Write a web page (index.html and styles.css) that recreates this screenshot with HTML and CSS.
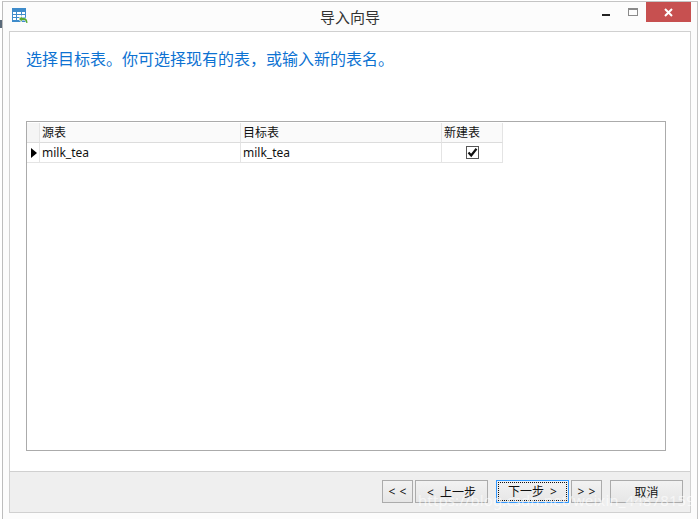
FILE: index.html
```html
<!DOCTYPE html>
<html lang="zh-CN">
<head>
  <meta charset="UTF-8" />
  <title>导入向导</title>
  <link rel="stylesheet" href="styles.css">
</head>
<body>
  <span class="behind"></span>
  <div class="window">
    <div class="titlebar">
      <svg class="app-icon" width="16" height="16" viewBox="0 0 16 16">
        <rect x="0.500" y="0.500" width="13" height="13" fill="#fff" stroke="#3f8ccb"/>
        <rect x="0" y="0" width="14" height="4" fill="#3f8ccb"/>
        <path d="M1 6.500H13M1 9.500H13M1 12.500H13M4.500 4V13M9.500 4V13" stroke="#3f8ccb" fill="none"/>
        <path d="M6 11L10 7V9.500H12C14.500 9.500 16 11.500 16 15H14C14 13.500 13 12.500 12 12.500H10V15Z" fill="#fff"/>
        <path d="M7 11L9.800 8.200V10H12C14 10 15.500 11.800 15.500 15H14.300C14 13.200 13.200 12 12 12H9.800V13.800Z" fill="#5aaa32"/>
      </svg>
      <div class="title">导入向导</div>
      <div class="controls">
        <span class="min"></span>
        <span class="max"></span>
        <span class="close">
          <svg width="9" height="9" viewBox="0 0 9 9"><path d="M1 1L8 8M8 1L1 8" stroke="#fff" stroke-width="2" fill="none"/></svg>
        </span>
      </div>
    </div>
    <div class="panel">
      <div class="content">
        <p class="hint">选择目标表。你可选择现有的表，或输入新的表名。</p>
        <div class="grid-box">
          <div class="grid">
            <div class="head corner"></div>
            <div class="head">源表</div>
            <div class="head">目标表</div>
            <div class="head">新建表</div>
            <div class="cell marker"><span class="arrow"></span></div>
            <div class="cell">milk_tea</div>
            <div class="cell">milk_tea</div>
            <div class="cell check-cell">
              <span class="checkbox">
                <svg width="11" height="11" viewBox="0 0 11 11"><path d="M1.500 5.500L4.200 8.500L9.500 1.800" stroke="#111" stroke-width="2.200" fill="none"/></svg>
              </span>
            </div>
          </div>
        </div>
      </div>
      <div class="footer">
        <button class="btn small">&lt; &lt;</button>
        <button class="btn medium">&lt; 上一步</button>
        <button class="btn medium active"><span class="focus">下一步 &gt;</span></button>
        <button class="btn small">&gt; &gt;</button>
        <button class="btn medium cancel">取消</button>
      </div>
    </div>
  </div>
  <div class="watermark">https://blog.csdn.net/weixin_44878159</div>
</body>
</html>
```

FILE: styles.css
```css
html, body {
  margin: 0;
  height: 100%;
  overflow: hidden;
}
body {
  background: #fff;
  font-family: "Noto Sans", "Noto Sans CJK SC", sans-serif;
  font-size: 12px;
  color: #111;
  position: relative;
}
/* sliver of the window behind the dialog */
.behind {
  position: absolute;
  left: 0;
  top: 20px;
  width: 2px;
  height: 8px;
  background: #5a6a7a;
}
.window {
  box-sizing: border-box;
  height: 518px;
  margin: 1px 2px 0;
  padding: 0 6px 6px;
  background: #fcfcfc;
  border-left: 1px solid #bdbdbd;
  border-right: 1px solid #c4c4c4;
  border-top: 1px solid #c4c4c4;
  display: flex;
  flex-direction: column;
}
.titlebar {
  height: 29px;
  flex: none;
  display: flex;
  align-items: flex-start;
  position: relative;
}
.app-icon {
  margin-left: 3px;
  margin-top: 6px;
}
.title {
  position: absolute;
  left: 0;
  right: 0;
  top: 6px;
  text-align: center;
  font-size: 15px;
  line-height: 18px;
  color: #333;
}
.controls {
  margin-left: auto;
  display: flex;
  align-items: flex-start;
}
.min {
  width: 8px;
  height: 2px;
  background: #222;
  margin-top: 12px;
  margin-right: 18px;
}
.max {
  box-sizing: border-box;
  width: 10px;
  height: 8px;
  border: 1px solid #8a8a8a;
  border-top-width: 2px;
  margin-top: 6px;
  margin-right: 8px;
}
.close {
  width: 45px;
  height: 20px;
  background: #c75050;
  display: flex;
  align-items: center;
  justify-content: center;
}
.panel {
  flex: 1;
  display: flex;
  flex-direction: column;
  border: 1px solid #d0d0d0;
  background: #fff;
}
.content {
  flex: 1;
  padding: 0 24px 0 16px;
  display: flex;
  flex-direction: column;
}
.hint {
  margin: 17px 0 0;
  font-size: 16px;
  line-height: 20px;
  color: #0d72d2;
}
.grid-box {
  box-sizing: border-box;
  height: 330px;
  margin-top: 52px;
  padding-top: 1px;
  border: 1px solid #ababab;
}
.grid {
  display: grid;
  grid-template-columns: 13px 201px 201px 61px;
  grid-template-rows: 20px 20px;
  width: max-content;
}
.head, .cell {
  box-sizing: border-box;
  border-right: 1px solid #e4e4e4;
  border-bottom: 1px solid #e4e4e4;
  padding-left: 2px;
  line-height: 19px;
  white-space: nowrap;
}
.head {
  background: #fafafa;
  border-bottom-color: #dcdcdc;
}
.corner {
  background: #f5f5f5;
}
.marker {
  padding-left: 4px;
  display: flex;
  align-items: center;
}
.arrow {
  width: 0;
  height: 0;
  border-top: 5.5px solid transparent;
  border-bottom: 5.5px solid transparent;
  border-left: 6px solid #000;
}
.check-cell {
  padding: 0;
  display: flex;
  align-items: center;
  justify-content: center;
}
.checkbox {
  box-sizing: border-box;
  width: 13px;
  height: 13px;
  background: #fff;
  border: 1px solid #555;
  display: flex;
}
.footer {
  height: 41px;
  flex: none;
  box-sizing: border-box;
  background: #efefef;
  border-top: 1px solid #d0d0d0;
  display: flex;
  gap: 2px;
  padding: 8px 7px 0 372px;
}
.btn {
  box-sizing: border-box;
  height: 23px;
  padding: 0;
  background: linear-gradient(#f2f2f2, #e6e6e6);
  border: 1px solid #ababab;
  font: inherit;
  word-spacing: 3px;
  color: #111;
}
.small {
  width: 31px;
  word-spacing: 1px;
}
.medium {
  width: 73px;
}
.active {
  margin-left: 6px;
  border-color: #3399ff;
  padding: 1px;
}
.focus {
  display: block;
  height: 19px;
  line-height: 17px;
  box-sizing: border-box;
  border: 1px dotted #111;
}
.cancel {
  margin-left: 6px;
}
.watermark {
  position: absolute;
  left: 418px;
  top: 491px;
  font-size: 15px;
  line-height: 18px;
  letter-spacing: 0.1px;
  color: rgba(255, 255, 255, 0.6);
  white-space: nowrap;
}
```
